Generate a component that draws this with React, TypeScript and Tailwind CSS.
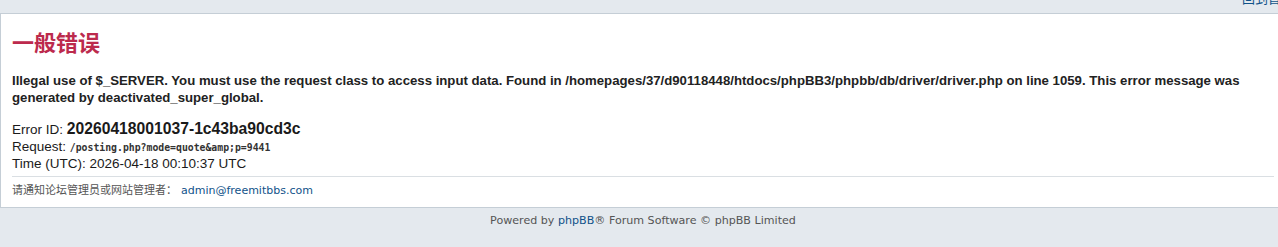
import React from 'react';

const App: React.FC = () => {
  return (
    <div className="w-[1278px] h-[247px] overflow-hidden bg-[#e4e9ee] font-['Liberation_Sans',Arial,sans-serif]">
      {/* clipped nav strip */}
      <div className="h-[13px] overflow-hidden flex justify-end">
        <a className="-mt-[10px] -mr-[16px] text-[13px] leading-[16px] text-[#105289] font-['Noto_Sans_CJK_SC',sans-serif] whitespace-nowrap">
          回到首页
        </a>
      </div>

      {/* error panel */}
      <div className="bg-white border-y border-l border-[#c5ced6] h-[195px] pl-[11px] pr-[4px]">
        <h2 className="pt-[12px] text-[22px] leading-[30px] font-bold text-[#bc2a4d] font-['Noto_Sans_CJK_SC',sans-serif]">
          一般错误
        </h2>
        <p className="mt-[16px] w-[1240px] text-[13.2px] leading-[17px] font-bold text-[#222]">
          Illegal use of $_SERVER. You must use the request class to access input data. Found in
          /homepages/37/d90118448/htdocs/phpBB3/phpbb/db/driver/driver.php on line 1059. This error
          message was generated by deactivated_super_global.
        </p>
        <div className="mt-[15px] text-[13.5px] text-[#1a1a1a]">
          <div className="h-[17px] leading-[17px]">
            Error ID: <span className="font-bold text-[15.7px] leading-none">20260418001037-1c43ba90cd3c</span>
          </div>
          <div className="h-[17px] leading-[17px]">
            Request:{' '}
            <span className="font-['DejaVu_Sans_Mono',monospace] font-bold text-[9.8px] leading-none text-[#333]">
              /posting.php?mode=quote&amp;amp;p=9441
            </span>
          </div>
          <div className="h-[17px] leading-[17px]">Time (UTC): 2026-04-18 00:10:37 UTC</div>
        </div>
        <div className="mt-[4px] border-t border-[#dadfe3]" />
        <p className="mt-[6px] text-[11px] leading-[16px] text-[#555] font-['DejaVu_Sans','Noto_Sans_CJK_SC',sans-serif]">
          请通知论坛管理员或网站管理者：
          <a className="ml-[4px] text-[#105289]">admin@freemitbbs.com</a>
        </p>
      </div>

      {/* footer */}
      <div className="text-center pt-[6px] pl-[8px] text-[11.1px] leading-[14px] text-[#555] font-['DejaVu_Sans',sans-serif]">
        Powered by <a className="text-[#105289]">phpBB</a>® Forum Software © phpBB Limited
      </div>
    </div>
  );
};

export default App;
